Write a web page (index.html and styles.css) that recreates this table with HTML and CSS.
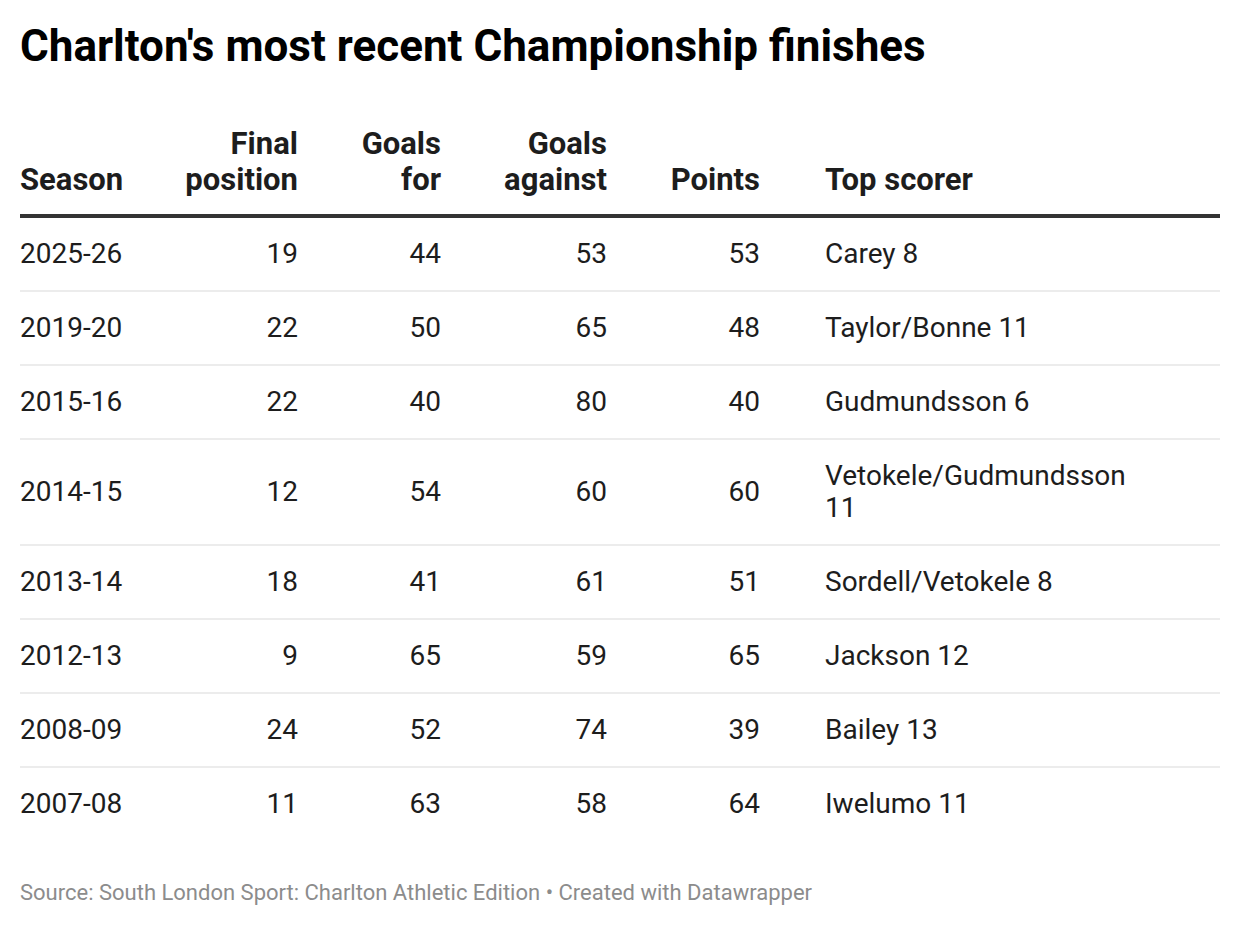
FILE: index.html
```html
<!DOCTYPE html>
<html lang="en">
<head>
<meta charset="utf-8">
<title>Charlton's most recent Championship finishes</title>
<link rel="stylesheet" href="styles.css">
</head>
<body>
<div class="chart">
  <h1 class="title">Charlton's most recent Championship finishes</h1>
  <table class="data">
    <colgroup>
      <col class="c-season">
      <col class="c-pos">
      <col class="c-for">
      <col class="c-against">
      <col class="c-points">
      <col class="c-scorer">
    </colgroup>
    <thead>
      <tr>
        <th class="left">Season</th>
        <th class="num">Final<br>position</th>
        <th class="num">Goals<br>for</th>
        <th class="num">Goals<br>against</th>
        <th class="num">Points</th>
        <th class="left scorer">Top scorer</th>
      </tr>
    </thead>
    <tbody>
      <tr><td>2025-26</td><td class="num">19</td><td class="num">44</td><td class="num">53</td><td class="num">53</td><td class="scorer">Carey 8</td></tr>
      <tr><td>2019-20</td><td class="num">22</td><td class="num">50</td><td class="num">65</td><td class="num">48</td><td class="scorer">Taylor/Bonne 11</td></tr>
      <tr><td>2015-16</td><td class="num">22</td><td class="num">40</td><td class="num">80</td><td class="num">40</td><td class="scorer">Gudmundsson 6</td></tr>
      <tr><td>2014-15</td><td class="num">12</td><td class="num">54</td><td class="num">60</td><td class="num">60</td><td class="scorer">Vetokele/Gudmundsson 11</td></tr>
      <tr><td>2013-14</td><td class="num">18</td><td class="num">41</td><td class="num">61</td><td class="num">51</td><td class="scorer">Sordell/Vetokele 8</td></tr>
      <tr><td>2012-13</td><td class="num">9</td><td class="num">65</td><td class="num">59</td><td class="num">65</td><td class="scorer">Jackson 12</td></tr>
      <tr><td>2008-09</td><td class="num">24</td><td class="num">52</td><td class="num">74</td><td class="num">39</td><td class="scorer">Bailey 13</td></tr>
      <tr><td>2007-08</td><td class="num">11</td><td class="num">63</td><td class="num">58</td><td class="num">64</td><td class="scorer">Iwelumo 11</td></tr>
    </tbody>
  </table>
  <p class="footer">Source: South London Sport: Charlton Athletic Edition • Created with Datawrapper</p>
</div>
</body>
</html>
```

FILE: styles.css
```css
html, body {
  margin: 0;
  padding: 0;
  background: #ffffff;
}

body {
  font-family: Roboto, "Liberation Sans", Arial, sans-serif;
  color: #1d1d1d;
}

.chart {
  padding: 20px 20px 0 20px;
}

.title {
  margin: 0;
  font-size: 44px;
  line-height: 52px;
  font-weight: 700;
  color: #000000;
}

.data {
  margin-top: 54px;
  width: 1200px;
  border-collapse: collapse;
  table-layout: fixed;
  font-size: 28px;
}

.c-season { width: 150px; }
.c-pos { width: 128px; }
.c-for { width: 143px; }
.c-against { width: 166px; }
.c-points { width: 153px; }
.c-scorer { width: 460px; }

.data th {
  font-size: 31px;
  font-weight: 700;
  line-height: 36px;
  color: #1d1d1d;
  vertical-align: bottom;
  padding: 0 0 16px 0;
  border-bottom: 4px solid #333333;
  text-align: left;
}

.data td {
  line-height: 32px;
  padding: 20px 0 20px 0;
  border-bottom: 2px solid #ececec;
  vertical-align: middle;
}

.data tbody tr:last-child td {
  border-bottom: none;
}

.data .num {
  text-align: right;
}

.data .scorer {
  padding-left: 65px;
  padding-right: 75px;
}

.footer {
  margin: 41px 0 0 0;
  font-size: 22px;
  line-height: 24px;
  color: #8c8c8c;
}
```
